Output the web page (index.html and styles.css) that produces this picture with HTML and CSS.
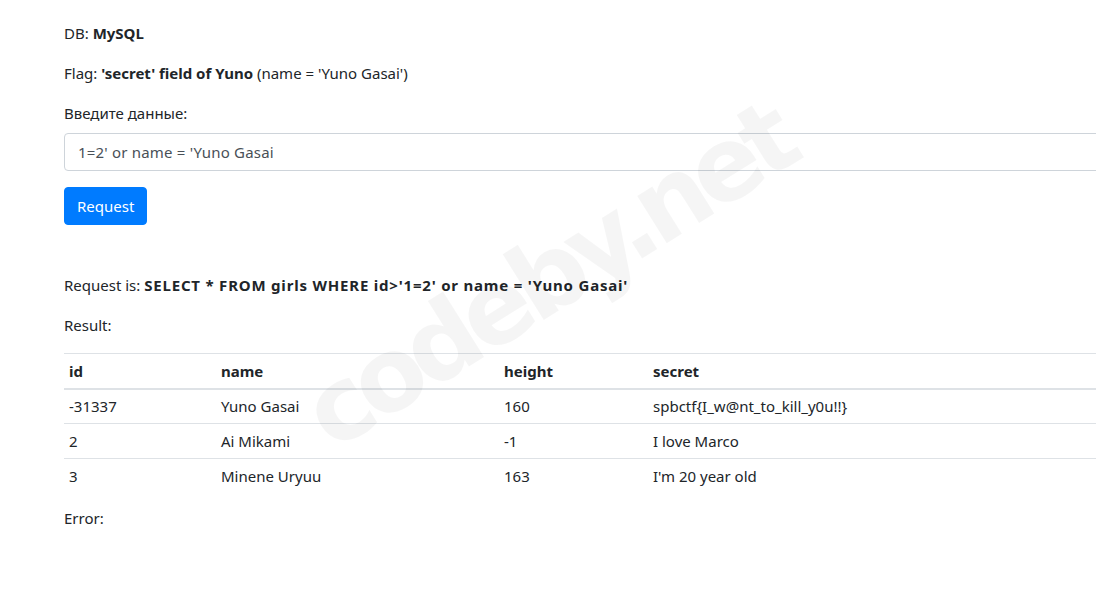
FILE: index.html
```html
<!DOCTYPE html>
<html lang="ru">
<head>
<meta charset="utf-8">
<title>SQL</title>
<link rel="stylesheet" href="styles.css">
</head>
<body>
<div class="page">
  <div class="container">
    <p>DB: <b>MySQL</b></p>
    <p>Flag: <b>'secret' field of Yuno</b> (name = 'Yuno Gasai')</p>
    <form class="form">
      <div class="form-group">
        <label class="label" for="q">Введите данные:</label>
        <input class="form-control" id="q" type="text" value="1=2' or name = 'Yuno Gasai">
      </div>
      <button class="btn" type="button">Request</button>
    </form>
    <p>Request is: <b class="query">SELECT * FROM girls WHERE id&gt;'1=2' or name = 'Yuno Gasai'</b></p>
    <p>Result:</p>
    <table class="table">
      <thead>
        <tr><th class="c1">id</th><th class="c2">name</th><th class="c3">height</th><th>secret</th></tr>
      </thead>
      <tbody>
        <tr><td>-31337</td><td>Yuno Gasai</td><td>160</td><td>spbctf{I_w@nt_to_kill_y0u!!}</td></tr>
        <tr><td>2</td><td>Ai Mikami</td><td>-1</td><td>I love Marco</td></tr>
        <tr><td>3</td><td>Minene Uryuu</td><td>163</td><td>I'm 20 year old</td></tr>
      </tbody>
    </table>
    <p>Error:</p>
  </div>
  <div class="watermark">codeby.net</div>
</div>
</body>
</html>
```

FILE: styles.css
```css
html, body {
  margin: 0;
  padding: 0;
  background: #fff;
}
body {
  font-family: "Noto Sans", "Open Sans", sans-serif;
  font-size: 15px;
  line-height: 24px;
  color: #212529;
  overflow: hidden;
}
.page {
  position: relative;
  width: 1096px;
  height: 590px;
  overflow: hidden;
}
.container {
  width: 1110px;
  margin-left: 64px;
  padding-top: 21px;
}
p {
  margin: 0 0 16px 0;
}
b {
  font-weight: 700;
}
.query {
  letter-spacing: 0.8px;
}
.form {
  margin-bottom: 48px;
}
.form-group {
  margin-bottom: 16px;
}
.label {
  display: block;
  margin-bottom: 8px;
}
.form-control {
  display: block;
  box-sizing: border-box;
  width: 100%;
  height: 38px;
  padding: 6px 12px 6px 13px;
  font-family: inherit;
  font-size: 15px;
  line-height: 24px;
  letter-spacing: 0.2px;
  color: #495057;
  background: #fff;
  border: 1px solid #ced4da;
  border-radius: 4px;
  outline: none;
}
.btn {
  display: inline-block;
  box-sizing: border-box;
  height: 38px;
  width: 83px;
  padding: 6px 12px;
  font-family: inherit;
  font-size: 15px;
  line-height: 24px;
  color: #fff;
  background: #007bff;
  border: 1px solid #007bff;
  border-radius: 4px;
  vertical-align: top;
}
.table {
  width: 100%;
  border-collapse: collapse;
  margin-bottom: 14px;
}
.table th, .table td {
  text-align: left;
  padding: 4.8px 5px 4.8px 5px;
  border-top: 1px solid #dee2e6;
  vertical-align: top;
}
.table th {
  font-weight: 700;
  border-bottom: 2px solid #dee2e6;
}
.table thead + tbody tr:first-child td {
  border-top: 0;
}
.c1 { width: 142px; }
.c2 { width: 273px; }
.c3 { width: 139px; }
.watermark {
  position: absolute;
  left: 198px;
  top: 226px;
  width: 700px;
  text-align: center;
  font-family: "DejaVu Sans", sans-serif;
  font-weight: 900;
  font-size: 102px;
  line-height: 100px;
  letter-spacing: -8px;
  color: rgba(0, 0, 0, 0.04);
  transform: rotate(-32deg);
  pointer-events: none;
  white-space: nowrap;
}
```
